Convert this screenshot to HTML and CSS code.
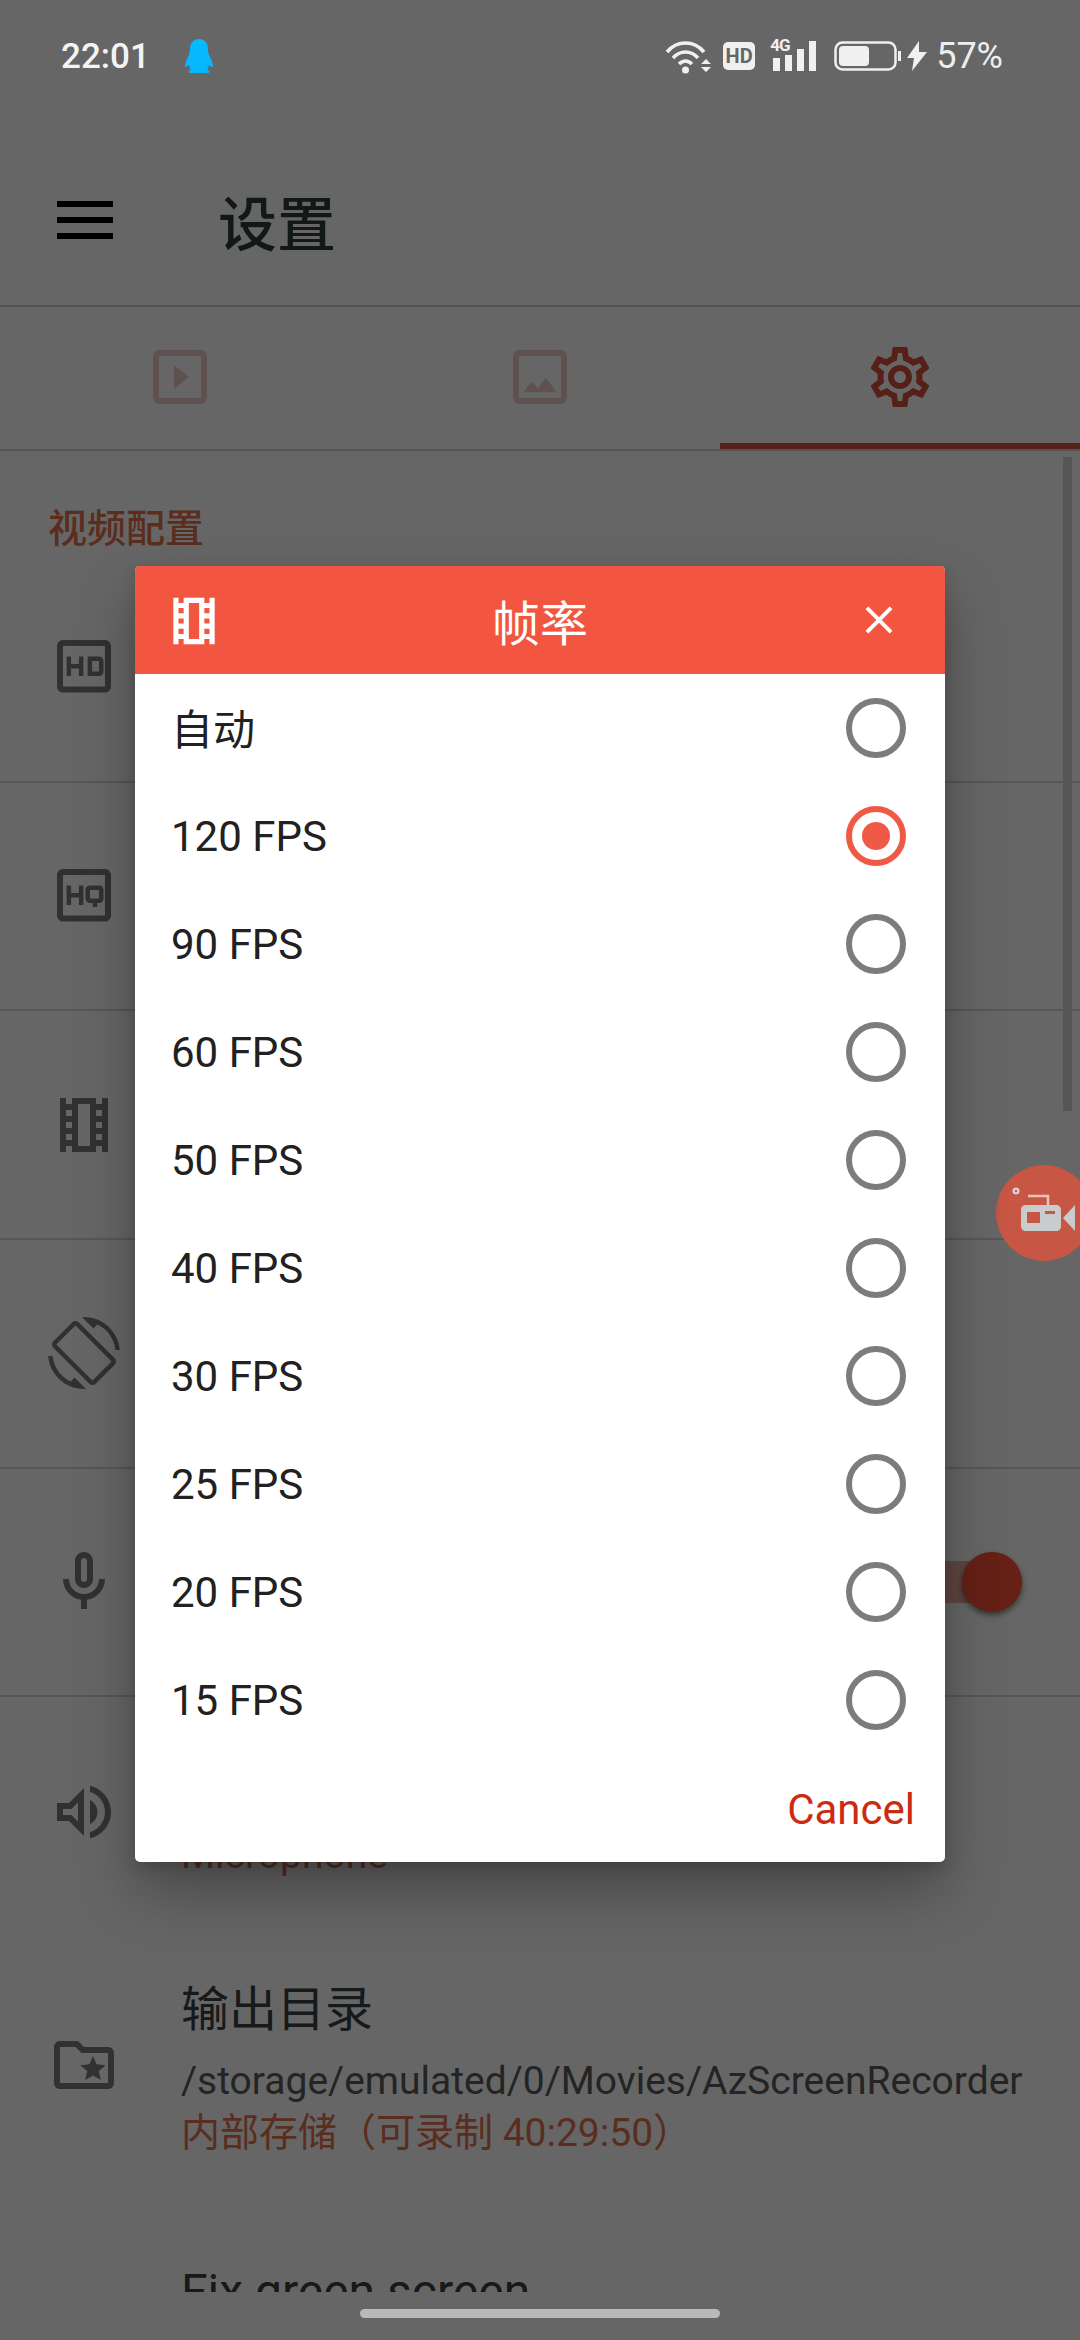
FILE: index.html
```html
<!DOCTYPE html>
<html lang="zh-CN">
<head>
    <meta charset="UTF-8">
    <meta name="viewport" content="width=device-width, initial-scale=1.0">
    <title>设置</title>
    <link rel="stylesheet" href="styles.css">
</head>
<body>
    <div class="screen">
        <!-- Status bar sits above the scrim -->
        <div class="status-bar">
            <div class="status-left">
                <span class="clock">22:01</span>
                <svg class="qq" viewBox="0 0 28 34"><path fill="#08b8ff" d="M14 0c6 0 9 4.500 9 10 0 3 .6 5 1.800 7.500 1.200 2.500 2.700 5.500 3.200 9.500.1 1-.8 1.400-1.500.8L24 26c-.3 1.800-.9 3.200-1.800 4.300l1.800 1.700c.6.6.3 2-.8 2H4.800c-1.100 0-1.400-1.400-.8-2l1.800-1.700C4.900 29.200 4.300 27.800 4 26l-2.500 1.800c-.7.6-1.600.2-1.500-.8.5-4 2-7 3.200-9.500C4.400 15 5 13 5 10 5 4.500 8 0 14 0z"/></svg>
            </div>
            <div class="status-right">
                <svg class="st-wifi" viewBox="0 0 47 35"><path fill="none" stroke="#f0f0f0" stroke-width="3.600" d="M2 13C12 1 29 1 39 13M8 19c7-8 18-8 25 0M14 25c4-4 9-4 13 0"/><circle cx="20.500" cy="31" r="3.500" fill="#f0f0f0"/><path fill="#f0f0f0" d="M41 20l5 5H36zM36 28h10l-5 5z"/></svg>
                <span class="st-hd">HD</span>
                <span class="st-signal">
                    <span class="st-4g">4G</span>
                    <svg viewBox="0 0 44 30"><path fill="#f0f0f0" d="M0 17h7v13H0zM12 14h7v16h-7zM24 8h7v22h-7zM36 0h7v30h-7z"/></svg>
                </span>
                <svg class="st-battery" viewBox="0 0 68 30"><rect x="1.500" y="1.500" width="60" height="27" rx="7" fill="none" stroke="#f0f0f0" stroke-width="2.500"/><rect x="5" y="5" width="30" height="20" rx="4" fill="#f0f0f0"/><path fill="#f0f0f0" d="M64 10h3v10h-3z"/></svg>
                <svg class="st-bolt" viewBox="0 0 20 30"><path fill="#f0f0f0" d="M12 0L0 17h7l-2 13 15-19h-8z"/></svg>
                <span class="st-pct">57%</span>
            </div>
        </div>

        <div class="toolbar">
            <div class="burger"><span></span><span></span><span></span></div>
            <h1>设置</h1>
        </div>

        <div class="tabs">
            <div class="tab">
                <svg class="tab-icon" viewBox="0 0 24 24"><path d="M19 3H5c-1.100 0-2 .9-2 2v14c0 1.100.9 2 2 2h14c1.100 0 2-.9 2-2V5c0-1.100-.9-2-2-2zm0 16H5V5h14v14zM10 8v8l5-4z"/></svg>
            </div>
            <div class="tab">
                <svg class="tab-icon" viewBox="0 0 24 24"><path d="M19 3H5c-1.100 0-2 .9-2 2v14c0 1.100.9 2 2 2h14c1.100 0 2-.9 2-2V5c0-1.100-.9-2-2-2zm0 16H5V5h14v14zM13.960 12.290l-2.750 3.540-1.960-2.360L6.500 17h11z"/></svg>
            </div>
            <div class="tab tab-active">
                <svg class="tab-icon" viewBox="0 0 24 24"><path d="M19.430 12.980c.04-.32.07-.64.07-.98 0-.34-.03-.66-.07-.98l2.110-1.650c.19-.15.24-.42.12-.64l-2-3.460c-.09-.16-.26-.25-.44-.25-.06 0-.12.01-.17.03l-2.490 1c-.52-.4-1.080-.73-1.690-.98l-.38-2.650C14.460 2.180 14.250 2 14 2h-4c-.25 0-.46.18-.49.42l-.38 2.650c-.61.25-1.170.59-1.690.98l-2.490-1c-.06-.02-.12-.03-.18-.03-.17 0-.34.09-.43.25l-2 3.460c-.13.22-.07.49.12.64l2.110 1.650c-.04.32-.07.65-.07.98 0 .33.03.66.07.98l-2.110 1.650c-.19.15-.24.42-.12.64l2 3.460c.09.16.26.25.44.25.06 0 .12-.01.17-.03l2.490-1c.52.4 1.080.73 1.690.98l.38 2.650c.03.24.24.42.49.42h4c.25 0 .46-.18.49-.42l.38-2.650c.61-.25 1.170-.59 1.690-.98l2.490 1c.06.02.12.03.18.03.17 0 .34-.09.43-.25l2-3.460c.12-.22.07-.49-.12-.64l-2.110-1.650zm-1.980-1.710c.04.31.05.52.05.73 0 .21-.02.43-.05.73l-.14 1.130.89.7 1.080.84-.7 1.210-1.270-.51-1.040-.42-.9.68c-.43.32-.84.56-1.250.73l-1.060.43-.16 1.130-.2 1.350h-1.400l-.19-1.350-.16-1.130-1.060-.43c-.43-.18-.83-.41-1.230-.71l-.91-.7-1.060.43-1.270.51-.7-1.210 1.080-.84.89-.7-.14-1.130c-.03-.31-.05-.54-.05-.74s.02-.43.05-.73l.14-1.130-.89-.7-1.080-.84.7-1.210 1.270.51 1.040.42.9-.68c.43-.32.84-.56 1.250-.73l1.060-.43.16-1.130.2-1.350h1.390l.19 1.350.16 1.130 1.060.43c.43.18.83.41 1.230.71l.91.7 1.060-.43 1.270-.51.7 1.210-1.070.85-.89.7.14 1.130zM12 8c-2.210 0-4 1.790-4 4s1.790 4 4 4 4-1.790 4-4-1.790-4-4-4zm0 6c-1.100 0-2-.9-2-2s.9-2 2-2 2 .9 2 2-.9 2-2 2z"/></svg>
            </div>
        </div>

        <div class="settings">
            <div class="scrollbar"></div>
            <div class="section-title">视频配置</div>

            <div class="row">
                <svg class="row-icon" viewBox="0 0 24 24"><path fill-rule="evenodd" d="M5 3h14c1.100 0 2 .9 2 2v13.500c0 1.100-.9 2-2 2H5c-1.100 0-2-.9-2-2V5c0-1.100.9-2 2-2zm0 2v13.500h14V5z"/><path d="M6.200 8.500h1.500v2.500h2.600V8.500h1.500v6.500h-1.500v-2.500H7.700V15H6.200zM13.200 8.500h3.800c.9 0 1.500.6 1.500 1.500v3.500c0 .9-.6 1.500-1.500 1.500h-3.800zm1.500 1.500v3.500h2.300V10z"/></svg>
            </div>
            <div class="row">
                <svg class="row-icon" viewBox="0 0 24 24"><path fill-rule="evenodd" d="M5 3h14c1.100 0 2 .9 2 2v13.500c0 1.100-.9 2-2 2H5c-1.100 0-2-.9-2-2V5c0-1.100.9-2 2-2zm0 2v13.500h14V5z"/><path d="M6.200 8.500h1.500v2.500h2.600V8.500h1.500v6.500h-1.500v-2.500H7.700V15H6.200zM14 8.500h3c.9 0 1.500.6 1.500 1.500v2.800c0 .9-.6 1.500-1.500 1.500h-.6v1.400h-1.500v-1.400H14c-.9 0-1.500-.6-1.500-1.500V10c0-.9.600-1.500 1.500-1.500zm0 1.500v2.800h3V10z"/></svg>
            </div>
            <div class="row">
                <svg class="row-icon" viewBox="0 0 24 24"><path d="M18 3v2h-2V3H8v2H6V3H4v18h2v-2h2v2h8v-2h2v2h2V3h-2zM8 17H6v-2h2v2zm0-4H6v-2h2v2zm0-4H6V7h2v2zm6 10h-4V5h4v14zm4-2h-2v-2h2v2zm0-4h-2v-2h2v2zm0-4h-2V7h2v2z"/></svg>
            </div>
            <div class="row">
                <svg class="row-icon" viewBox="0 0 24 24"><path d="M16.480 2.520c3.270 1.550 5.610 4.720 5.970 8.480h1.500C23.440 4.840 18.290 0 12 0l-.66.03 3.810 3.810 1.330-1.320zm-6.250-.77c-.59-.59-1.540-.59-2.120 0L1.750 8.110c-.59.59-.59 1.540 0 2.120l12.020 12.020c.59.59 1.540.59 2.120 0l6.360-6.360c.59-.59.59-1.540 0-2.120L10.230 1.750zm4.600 19.440L2.810 9.170l6.360-6.360 12.020 12.020-6.360 6.360zm-7.310.29C4.250 19.940 1.910 16.760 1.550 13H.05C.56 19.160 5.710 24 12 24l.66-.03-3.810-3.810-1.330 1.320z"/></svg>
            </div>
            <div class="row">
                <svg class="row-icon" viewBox="0 0 24 24"><path d="M12 14c1.660 0 3-1.340 3-3V5c0-1.660-1.340-3-3-3S9 3.340 9 5v6c0 1.660 1.340 3 3 3zm-1-9c0-.55.45-1 1-1s1 .45 1 1v6c0 .55-.45 1-1 1s-1-.45-1-1V5zm6 6c0 2.760-2.240 5-5 5s-5-2.240-5-5H5c0 3.530 2.610 6.430 6 6.920V21h2v-3.080c3.390-.49 6-3.390 6-6.920h-2z"/></svg>
                <div class="switch"><span class="switch-track"></span><span class="switch-thumb"></span></div>
            </div>
            <div class="row row-audio">
                <svg class="row-icon" viewBox="0 0 24 24"><path d="M3 9v6h4l5 5V4L7 9H3zm7-.17v6.340L7.830 13H5v-2h2.830L10 8.830zM16.500 12c0-1.770-1.020-3.290-2.500-4.030v8.050c1.480-.73 2.500-2.250 2.500-4.020zM14 3.230v2.060c2.890.86 5 3.540 5 6.710s-2.110 5.850-5 6.710v2.060c4.010-.91 7-4.490 7-8.770 0-4.280-2.990-7.860-7-8.770z"/></svg>
                <div class="row-text">
                    <div class="row-sub">Microphone</div>
                </div>
            </div>
            <div class="row row-output">
                <svg class="row-icon" viewBox="0 0 24 24"><path d="M20 6h-8l-2-2H4c-1.100 0-1.990.9-1.990 2L2 18c0 1.100.9 2 2 2h16c1.100 0 2-.9 2-2V8c0-1.100-.9-2-2-2zm0 12H4V6h5.170l2 2H20v10zm-6.920-3.960L12.390 17 15 15.470 17.610 17l-.69-2.960 2.300-1.990-3.030-.26L15 9l-1.190 2.790-3.030.26z"/></svg>
                <div class="row-text">
                    <div class="row-title">输出目录</div>
                    <div class="row-value">/storage/emulated/0/Movies/AzScreenRecorder</div>
                    <div class="row-sub">内部存储（可录制 40:29:50）</div>
                </div>
            </div>
            <div class="row-last">
                <div class="row-title">Fix green screen</div>
            </div>
        </div>

        <div class="scrim"></div>

        <!-- Floating recorder bubble -->
        <div class="bubble">
            <svg viewBox="0 0 96 96"><circle cx="20" cy="26" r="3.500" fill="#d5d5d5"/><circle cx="20" cy="26" r="1.200" fill="#c75644"/><path fill="none" stroke="#e9c4bc" stroke-width="2.500" d="M32 31h20v9"/><path fill-rule="evenodd" fill="#c9cbcd" d="M30 40h30c3 0 5 2 5 5v16c0 3-2 5-5 5H30c-3 0-5-2-5-5V45c0-3 2-5 5-5zm1 7v11h13V47z"/><path fill="#c75644" d="M49 46h10v3H49z"/><path fill="#c9cbcd" d="M67 53l12-13v26z"/></svg>
        </div>

        <div class="dialog">
            <div class="dialog-head">
                <svg class="head-film" viewBox="0 0 24 24"><path fill="#fff" d="M18 3v2h-2V3H8v2H6V3H4v18h2v-2h2v2h8v-2h2v2h2V3h-2zM8 17H6v-2h2v2zm0-4H6v-2h2v2zm0-4H6V7h2v2zm6 10h-4V5h4v14zm4-2h-2v-2h2v2zm0-4h-2v-2h2v2zm0-4h-2V7h2v2z"/></svg>
                <span class="dialog-title">帧率</span>
                <svg class="head-close" viewBox="0 0 24 24"><path fill="#fff" d="M19 6.410L17.590 5 12 10.590 6.410 5 5 6.410 10.590 12 5 17.590 6.410 19 12 13.410 17.590 19 19 17.590 13.410 12z"/></svg>
            </div>
            <ul class="options">
                <li><span class="cjk">自动</span><i class="radio"></i></li>
                <li><span>120 FPS</span><i class="radio radio-on"></i></li>
                <li><span>90 FPS</span><i class="radio"></i></li>
                <li><span>60 FPS</span><i class="radio"></i></li>
                <li><span>50 FPS</span><i class="radio"></i></li>
                <li><span>40 FPS</span><i class="radio"></i></li>
                <li><span>30 FPS</span><i class="radio"></i></li>
                <li><span>25 FPS</span><i class="radio"></i></li>
                <li><span>20 FPS</span><i class="radio"></i></li>
                <li><span>15 FPS</span><i class="radio"></i></li>
            </ul>
            <div class="dialog-foot"><button type="button">Cancel</button></div>
        </div>

        <div class="home-bar"></div>
    </div>
</body>
</html>
```

FILE: styles.css
```css
* {
    box-sizing: border-box;
}

body {
    margin: 0;
    background: #fff;
    font-family: Roboto, "Noto Sans CJK SC", sans-serif;
}

.screen {
    position: relative;
    width: 1080px;
    height: 2340px;
    overflow: hidden;
    display: flex;
    flex-direction: column;
}

/* status bar */
.status-bar {
    position: relative;
    z-index: 3;
    height: 112px;
    flex: none;
    display: flex;
    justify-content: space-between;
    align-items: center;
    padding: 0 77px 0 61px;
    color: #f4f4f4;
}
.status-left {
    display: flex;
    align-items: center;
    gap: 35px;
}
.clock {
    font-size: 35px;
    font-weight: 500;
}
.qq {
    width: 28px;
    height: 34px;
}
.status-right {
    display: flex;
    align-items: center;
}
.st-wifi {
    width: 47px;
    height: 35px;
    margin-right: 11px;
}
.st-hd {
    width: 32px;
    height: 28px;
    border-radius: 5px;
    background: #f0f0f0;
    color: #666;
    font-size: 20px;
    font-weight: 700;
    line-height: 28px;
    text-align: center;
    margin-right: 18px;
}
.st-signal {
    position: relative;
    width: 44px;
    height: 30px;
    margin-right: 17px;
}
.st-signal svg {
    display: block;
    width: 44px;
    height: 30px;
}
.st-4g {
    position: absolute;
    left: -3px;
    top: -3px;
    font-size: 17px;
    font-weight: 700;
    letter-spacing: -1px;
    line-height: 15px;
    color: #f0f0f0;
    background: #666;
}
.st-battery {
    width: 68px;
    height: 30px;
    margin-right: 5px;
}
.st-bolt {
    width: 20px;
    height: 30px;
    margin-right: 9px;
}
.st-pct {
    font-size: 36px;
    color: #eee;
}

/* toolbar */
.toolbar {
    height: 195px;
    flex: none;
    padding: 23px 0 0 57px;
    display: flex;
    align-items: center;
    background: #fff;
    border-bottom: 2px solid #d0d0d0;
}
.burger {
    width: 56px;
    display: flex;
    flex-direction: column;
    gap: 10px;
}
.burger span {
    height: 6px;
    background: #000;
}
.toolbar h1 {
    margin: 0 0 0 105px;
    font-size: 59px;
    font-weight: 500;
    color: #2f3d3d;
}

/* tabs */
.tabs {
    height: 144px;
    flex: none;
    display: flex;
    background: #fff;
    border-bottom: 2px solid #d4d4d4;
}
.tab {
    position: relative;
    flex: 1;
    display: flex;
    align-items: center;
    justify-content: center;
    padding-bottom: 2px;
}
.tab-icon {
    width: 72px;
    height: 72px;
    fill: #eecbc6;
}
.tab-active::after {
    content: "";
    position: absolute;
    left: 0;
    right: 0;
    bottom: 0;
    height: 6px;
    background: #d8543f;
}
.tab-active .tab-icon {
    fill: #d8503c;
}

/* settings list */
.settings {
    position: relative;
    height: 1841px;
    flex: none;
    overflow: hidden;
    background: #fff;
}
.scrollbar {
    position: absolute;
    right: 8px;
    top: 6px;
    width: 9px;
    height: 654px;
    background: #d4d4d4;
}
.section-title {
    height: 103px;
    padding: 54px 0 0 48px;
    font-size: 39px;
    line-height: 48px;
    font-weight: 500;
    color: #e0714f;
}
.row {
    position: relative;
    height: 228.700px;
    display: flex;
    align-items: center;
    padding-left: 48px;
    gap: 61px;
    border-bottom: 2px solid #d9d9d9;
}
.row-audio,
.row-output {
    border-bottom: none;
}
.row-audio {
    height: 229px;
}
.row-audio .row-text {
    padding-top: 86px;
}
.row-output {
    height: 277px;
}
.row-output .row-text {
    padding-top: 8px;
}
.row-icon {
    flex: none;
    width: 72px;
    height: 72px;
    fill: #7c7c7c;
}
.row-title {
    font-size: 48px;
    line-height: 62px;
    color: #3a4242;
}
.row-value {
    font-size: 39px;
    line-height: 52px;
    margin-top: 14px;
    color: #5a5a5a;
    white-space: nowrap;
}
.row-sub {
    font-size: 39px;
    line-height: 52px;
    color: #e0714f;
}
.row-last {
    padding: 58px 0 0 181px;
}
.switch {
    position: absolute;
    left: 880px;
    top: 83px;
    width: 145px;
    height: 60px;
}
.switch-track {
    position: absolute;
    left: 0;
    top: 9px;
    width: 110px;
    height: 42px;
    background: #f0b0a6;
    border-radius: 21px;
}
.switch-thumb {
    position: absolute;
    right: 3px;
    top: 0;
    width: 60px;
    height: 60px;
    border-radius: 50%;
    background: #ff5038;
    box-shadow: 0 3px 6px rgba(0, 0, 0, 0.5);
}

/* dim layer behind the dialog */
.scrim {
    position: absolute;
    inset: 0;
    z-index: 1;
    background: rgba(0, 0, 0, 0.6);
}

.bubble {
    position: absolute;
    z-index: 2;
    left: 996px;
    top: 1165px;
    width: 96px;
    height: 96px;
    border-radius: 50%;
    background: #c75644;
}
.bubble svg {
    display: block;
    width: 96px;
    height: 96px;
}

/* dialog */
.dialog {
    position: absolute;
    z-index: 2;
    left: 135px;
    top: 566px;
    width: 810px;
    height: 1296px;
    background: #fff;
    border-radius: 5px;
    box-shadow: 0 30px 60px rgba(0, 0, 0, 0.3), 0 6px 14px rgba(0, 0, 0, 0.15);
    display: flex;
    flex-direction: column;
}
.dialog-head {
    position: relative;
    height: 108px;
    flex: none;
    background: #f25640;
    border-radius: 5px 5px 0 0;
    display: flex;
    align-items: center;
    justify-content: center;
}
.head-film {
    position: absolute;
    left: 28px;
    top: 24px;
    width: 62px;
    height: 62px;
}
.head-close {
    position: absolute;
    right: 43px;
    top: 31px;
    width: 46px;
    height: 46px;
}
.dialog-title {
    font-size: 48px;
    color: #fff;
}
.options {
    list-style: none;
    margin: 0;
    padding: 0;
}
.options li {
    height: 108px;
    display: flex;
    align-items: center;
    justify-content: space-between;
    padding: 0 39px 0 36px;
    font-size: 42px;
    color: #212121;
}
.cjk {
    margin-bottom: 4px;
}
.radio {
    width: 60px;
    height: 60px;
    border-radius: 50%;
    border: 6px solid #7c7c7c;
    display: flex;
    align-items: center;
    justify-content: center;
}
.radio-on {
    border-color: #ee5a45;
}
.radio-on::after {
    content: "";
    width: 28px;
    height: 28px;
    border-radius: 50%;
    background: #ee5a45;
}
.dialog-foot {
    flex: 1;
    display: flex;
    justify-content: flex-end;
    align-items: center;
    padding: 3px 30px 0 0;
}
.dialog-foot button {
    border: none;
    background: none;
    padding: 0;
    font: inherit;
    font-size: 42px;
    color: #cc2a12;
}

.home-bar {
    position: absolute;
    z-index: 3;
    left: 360px;
    top: 2309px;
    width: 360px;
    height: 9px;
    border-radius: 5px;
    background: #b9b9b9;
}
```
